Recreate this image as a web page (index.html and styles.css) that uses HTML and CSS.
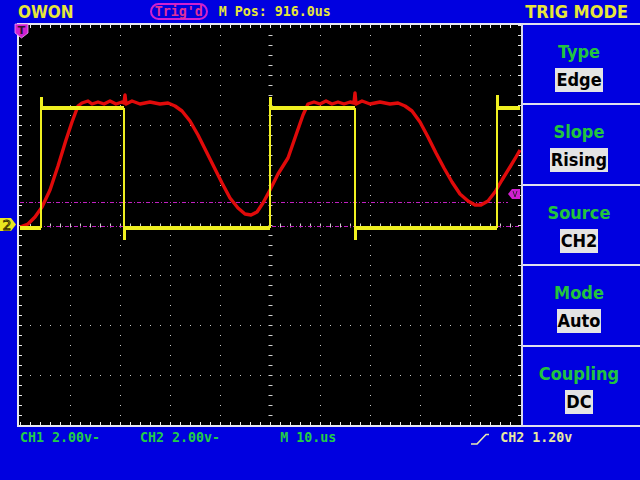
FILE: index.html
```html
<!DOCTYPE html>
<html>
<head>
<meta charset="utf-8">
<link rel="stylesheet" href="styles.css">
</head>
<body>
<div class="scope">
  <header class="topbar">
    <span class="brand">OWON</span>
    <span class="trigd">Trig'd</span>
    <span class="mpos">M Pos: 916.0us</span>
    <span class="menu-title">TRIG MODE</span>
  </header>
  <main class="main">
    <svg class="plot" width="521" height="404" viewBox="0 23 521 404" xmlns="http://www.w3.org/2000/svg">
      <rect x="19" y="25" width="502" height="400" fill="#000"/>
      <!-- frame -->
      <rect x="17" y="23" width="504" height="2" fill="#e8e8f0"/>
      <rect x="17" y="425" width="504" height="2" fill="#e8e8f0"/>
      <rect x="17" y="23" width="2" height="404" fill="#e8e8f0"/>
      <!-- edge ticks -->
      <line x1="20" y1="26.5" x2="520" y2="26.5" stroke="#e8e8e8" stroke-width="3" stroke-dasharray="1 9"/>
      <line x1="20" y1="423.5" x2="520" y2="423.5" stroke="#e8e8e8" stroke-width="3" stroke-dasharray="1 9"/>
      <line x1="20.5" y1="25" x2="20.5" y2="425" stroke="#e8e8e8" stroke-width="3" stroke-dasharray="1 9"/>
      <line x1="519.5" y1="25" x2="519.5" y2="425" stroke="#e8e8e8" stroke-width="3" stroke-dasharray="1 9"/>
      <!-- grid dots -->
      <g stroke="#c8c8c8" stroke-width="1" stroke-dasharray="1 9">
        <line x1="70.5" y1="35" x2="70.5" y2="420"/>
        <line x1="120.5" y1="35" x2="120.5" y2="420"/>
        <line x1="170.5" y1="35" x2="170.5" y2="420"/>
        <line x1="220.5" y1="35" x2="220.5" y2="420"/>
        <line x1="320.5" y1="35" x2="320.5" y2="420"/>
        <line x1="370.5" y1="35" x2="370.5" y2="420"/>
        <line x1="420.5" y1="35" x2="420.5" y2="420"/>
        <line x1="470.5" y1="35" x2="470.5" y2="420"/>
        <line x1="30" y1="75.5" x2="515" y2="75.5"/>
        <line x1="30" y1="125.5" x2="515" y2="125.5"/>
        <line x1="30" y1="175.5" x2="515" y2="175.5"/>
        <line x1="30" y1="275.5" x2="515" y2="275.5"/>
        <line x1="30" y1="325.5" x2="515" y2="325.5"/>
        <line x1="30" y1="375.5" x2="515" y2="375.5"/>
      </g>
      <!-- center axes -->
      <line x1="270.5" y1="35" x2="270.5" y2="420" stroke="#d0d0d0" stroke-width="4" stroke-dasharray="1 9"/>
      <line x1="30" y1="225.5" x2="515" y2="225.5" stroke="#d0d0d0" stroke-width="4" stroke-dasharray="1 9"/>
      <!-- level lines -->
      <line x1="20" y1="202.5" x2="508" y2="202.5" stroke="#c020c0" stroke-width="1" stroke-dasharray="4 2 1 2"/>
      <line x1="20" y1="226.5" x2="520" y2="226.5" stroke="#c020c0" stroke-width="1" stroke-dasharray="4 2 1 2"/>
      <!-- red trace -->
      <polyline fill="none" stroke="#e00a0a" stroke-width="3.4" stroke-linejoin="round"
        points="20,227 28,224 35,217 42,207 50,190 58,166 66,140 72,122 78,106 82,103 88,101 92,104 98,102 104,104 110,101 116,104 122,102 124,103 125,95 126,104 132,101 140,104 150,102 160,104 168,103 175,106 182,111 190,121 198,135 206,151 214,167 222,183 230,198 238,208 245,214 251,215 257,212 263,203 270,190 278,174 288,158 296,135 303,115 308,104 314,102 320,104 326,101 332,104 338,102 344,104 350,102 354,103 355,93 356,104 362,101 370,104 380,102 390,104 398,103 405,106 412,111 420,122 428,137 436,153 444,168 452,182 460,194 468,201 475,205 481,205 488,201 495,192 502,180 510,167 516,157 520,150"/>
      <!-- yellow trace -->
      <g stroke="#f0f020" fill="none">
        <path stroke-width="4" d="M20,228 H41 M42,108 H124 M125,228 H270 M271,108 H355 M356,228 H497 M498,108 H520"/>
        <path stroke-width="2" d="M41,228 V97 M42,97 V108 M124,108 V240 M125,240 V228 M270,228 V97 M271,97 V108 M355,108 V240 M356,240 V228 M497,228 V95 M498,95 V108"/>
      </g>
      <!-- markers -->
      <polygon points="15,24 28,24 28,33 21.5,38 15,33" fill="#d020d0" stroke="#f0a0f0" stroke-width="0.8"/>
      <text x="21.5" y="34" class="mk-t">T</text>
      <polygon points="0,218 11,218 16,224.5 11,231 0,231" fill="#e8e820"/>
      <text x="7" y="230" class="mk-2">2</text>
      <polygon points="508,194 512,189 520,189 520,199 512,199" fill="#d020d0"/>
      <path d="M513,191 L515,197 L517,191" fill="none" stroke="#402040" stroke-width="1"/>
    </svg>
    <aside class="menu">
      <div class="item"><div class="label">Type</div><div class="value">Edge</div></div>
      <div class="item"><div class="label">Slope</div><div class="value">Rising</div></div>
      <div class="item"><div class="label">Source</div><div class="value">CH2</div></div>
      <div class="item"><div class="label">Mode</div><div class="value">Auto</div></div>
      <div class="item"><div class="label">Coupling</div><div class="value">DC</div></div>
    </aside>
  </main>
  <footer class="bottombar">
    <span class="ch1">CH1 2.00v-</span>
    <span class="ch2">CH2 2.00v-</span>
    <span class="tb">M 10.us</span>
    <svg class="slope" width="18" height="12" viewBox="0 0 18 12"><path d="M0,11 H6 L15,1.5 H18" fill="none" stroke="#e8e8b0" stroke-width="1.6"/></svg>
    <span class="trig">CH2 1.20v</span>
  </footer>
</div>
</body>
</html>
```
FILE: styles.css
```css
html, body {
  margin: 0;
  padding: 0;
  background: #0000e0;
}
.scope {
  width: 640px;
  height: 480px;
  background: #0000e0;
  display: flex;
  flex-direction: column;
  overflow: hidden;
}
.topbar {
  height: 23px;
  display: flex;
  align-items: center;
  padding-left: 18px;
  box-sizing: border-box;
}
.brand {
  font-family: "DejaVu Sans", "Liberation Sans", sans-serif;
  font-stretch: condensed;
  font-weight: bold;
  font-size: 17px;
  color: #e6e63a;
  line-height: 20px;
}
.trigd {
  margin-left: 76px;
  font-family: "DejaVu Sans Mono", monospace;
  font-weight: bold;
  font-size: 13.3px;
  line-height: 13px;
  color: #e0309a;
  border: 2px solid #d020d0;
  border-radius: 9px;
  padding: 0 3px;
  height: 13px;
}
.mpos {
  margin-left: 11px;
  font-family: "DejaVu Sans Mono", monospace;
  font-weight: bold;
  font-size: 13.3px;
  color: #e6e63a;
}
.menu-title {
  margin-left: auto;
  margin-right: 12px;
  font-family: "DejaVu Sans", "Liberation Sans", sans-serif;
  font-stretch: condensed;
  font-weight: bold;
  font-size: 18px;
  color: #e6e63a;
}
.main {
  height: 404px;
  display: flex;
}
.plot {
  display: block;
  flex: none;
}
.mk-t {
  font-family: "DejaVu Sans", sans-serif;
  font-weight: bold;
  font-size: 11px;
  fill: #301030;
  text-anchor: middle;
}
.mk-2 {
  font-family: "DejaVu Sans", sans-serif;
  font-size: 14px;
  fill: #e8e820;
  stroke: #302a00;
  stroke-width: 0.9;
  text-anchor: middle;
}
.menu {
  flex: 1;
  display: flex;
  flex-direction: column;
  border-top: 2px solid #e0e0ee;
  border-bottom: 2px solid #e0e0ee;
  border-left: 2px solid #d8d8ec;
}
.item {
  flex: 1;
  display: flex;
  flex-direction: column;
  align-items: center;
  padding-top: 16px;
  padding-right: 5px;
  box-sizing: border-box;
  font-family: "DejaVu Sans", "Liberation Sans", sans-serif;
  font-stretch: condensed;
  font-weight: bold;
  font-size: 18px;
}
.item + .item {
  border-top: 2px solid #e0e0ee;
}
.label {
  color: #22c43e;
  line-height: 22px;
}
.value {
  margin-top: 5px;
  background: #e4e4e4;
  color: #000;
  line-height: 24px;
  height: 24px;
  padding: 0 1px;
}
.bottombar {
  flex: 1;
  display: flex;
  align-items: flex-start;
  padding-left: 20px;
  padding-top: 3px;
  font-family: "DejaVu Sans Mono", monospace;
  font-weight: bold;
  font-size: 13.3px;
  line-height: 16px;
  color: #22cc48;
}
.ch2 { margin-left: 40px; }
.tb { margin-left: 60px; }
.slope {
  margin-left: 135px;
  margin-top: 3px;
  flex: none;
}
.trig {
  margin-left: 11px;
  color: #e8e8a0;
}
```
